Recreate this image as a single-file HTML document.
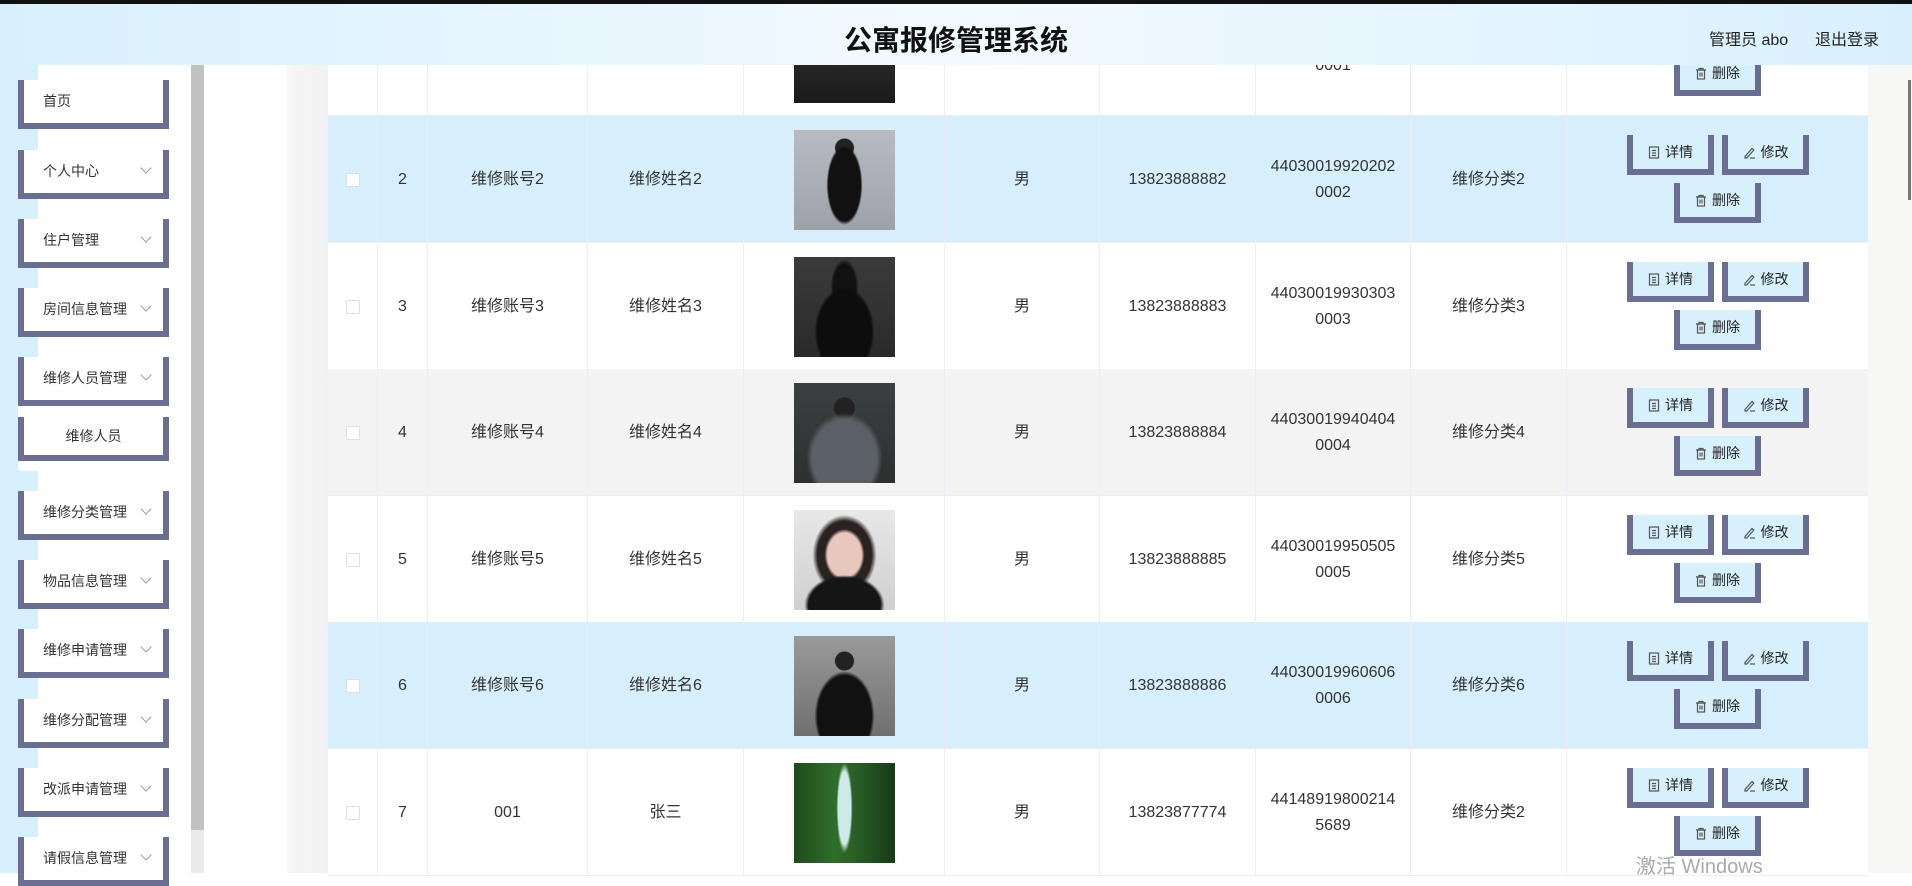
<!DOCTYPE html>
<html><head><meta charset="utf-8"><style>
*{margin:0;padding:0;box-sizing:border-box}
body{width:1912px;height:873px;overflow:hidden;position:relative;background:#fff;font-family:"Liberation Sans","Noto Sans CJK SC",sans-serif;color:#333}
.abs{position:absolute}
#hdr{left:0;top:0;width:1912px;height:65px;background:linear-gradient(90deg,#d8f0fd 0%,#e8f6fe 30%,#f2faff 50%,#e6f5fe 75%,#d8f0fd 100%);border-top:4px solid #111;z-index:10}
#hdr .t{position:absolute;left:0;right:0;top:15px;text-align:center;font-size:28px;font-weight:bold;color:#111}
#hdr .u{position:absolute;top:22px;font-size:16px;color:#222}
.mi{position:absolute;left:18px;width:151px;height:49px;background:#fff;border:6px solid #6b6e93;border-top:none;font-size:14px;color:#333;line-height:43px;padding-left:19px}
.mi .ch{position:absolute;right:13px;top:14px;width:8px;height:8px;border-right:1px solid #999;border-bottom:1px solid #999;transform:rotate(45deg)}
.row{position:absolute;left:328px;width:1540px;height:127px;border-bottom:1px solid #ebeef5}
.c{position:absolute;top:0;height:127px;border-right:1px solid #ebeef5;display:flex;align-items:center;justify-content:center;text-align:center;font-size:16px;line-height:26px;color:#333}
.cb{width:14px;height:14px;background:#fff;border:1px solid #dcdfe6;border-radius:2px}
.img{width:101px;height:100px}
.btn{position:absolute;width:87px;height:40px;background:#d6f0fc;border:6px solid #6b6e93;border-top:none;font-size:14px;color:#222;text-align:center;line-height:34px}
.btn svg{vertical-align:-2px;margin-right:5px}
</style></head><body>
<div id="hdr" class="abs"><div class="t">公寓报修管理系统</div><div class="u" style="left:1709px">管理员 abo</div><div class="u" style="left:1815px">退出登录</div></div>
<div class="abs" style="left:0;top:65px;width:38px;height:808px;background:#d6effc"></div>
<div class="abs" style="left:38px;top:65px;width:153px;height:808px;background:#fff"></div>
<div class="abs" style="left:191px;top:65px;width:13px;height:808px;background:#eaeaea"></div>
<div class="abs" style="left:191px;top:65px;width:13px;height:765px;background:#c1c1c1"></div>
<div class="abs" style="left:287px;top:65px;width:41px;height:808px;background:linear-gradient(90deg,#f6f6f6,#f1f1f1)"></div>
<div class="abs" style="left:1868px;top:65px;width:44px;height:808px;background:#f7f7f5"></div>
<div class="abs" style="left:1908px;top:80px;width:3px;height:120px;background:#777"></div>

<div class="mi" style="top:80px">首页</div>
<div class="mi" style="top:150px">个人中心<span class="ch"></span></div>
<div class="mi" style="top:219px">住户管理<span class="ch"></span></div>
<div class="mi" style="top:288px">房间信息管理<span class="ch"></span></div>
<div class="mi" style="top:357px">维修人员管理<span class="ch"></span></div>
<div class="abs" style="left:18px;top:406px;width:151px;height:65px;background:#fff;border-radius:0 0 4px 4px"></div>
<div class="mi" style="top:417px;height:44px;line-height:38px;padding-left:0;text-align:center">维修人员</div>
<div class="mi" style="top:491px">维修分类管理<span class="ch"></span></div>
<div class="mi" style="top:560px">物品信息管理<span class="ch"></span></div>
<div class="mi" style="top:629px">维修申请管理<span class="ch"></span></div>
<div class="mi" style="top:699px">维修分配管理<span class="ch"></span></div>
<div class="mi" style="top:768px">改派申请管理<span class="ch"></span></div>
<div class="mi" style="top:837px">请假信息管理<span class="ch"></span></div>

<div id="rows"></div>
<div class="abs" style="left:1636px;top:850px;font-size:20px;color:#aaa;z-index:5">激活 Windows</div>
<script>
var tops=[-11,116,243,369,496,622,749];
var bgs=['#fff','#d7effc','#fff','#f3f3f3','#fff','#d7effc','#fff'];
var acc=['维修账号1','维修账号2','维修账号3','维修账号4','维修账号5','维修账号6','001'];
var nm=['维修姓名1','维修姓名2','维修姓名3','维修姓名4','维修姓名5','维修姓名6','张三'];
var ph=['13823888881','13823888882','13823888883','13823888884','13823888885','13823888886','13823877774'];
var id=['44030019910101<br>0001','44030019920202<br>0002','44030019930303<br>0003','44030019940404<br>0004','44030019950505<br>0005','44030019960606<br>0006','44148919800214<br>5689'];
var cat=['维修分类1','维修分类2','维修分类3','维修分类4','维修分类5','维修分类6','维修分类2'];
var imgs=['linear-gradient(#3a3a3a,#1a1a1a)',
'radial-gradient(ellipse 18px 40px at 50% 55%,#111 90%,transparent 100%),radial-gradient(circle 10px at 50% 18%,#222 90%,transparent),linear-gradient(#b8bcc2,#9da2a8)',
'radial-gradient(ellipse 30px 45px at 50% 75%,#0d0d0d 90%,transparent 100%),radial-gradient(ellipse 14px 28px at 50% 30%,#111 80%,transparent),linear-gradient(#3b3b3b,#2a2a2a)',
'radial-gradient(ellipse 38px 45px at 50% 75%,#5b5f66 85%,transparent 100%),radial-gradient(circle 11px at 50% 25%,#222 90%,transparent),linear-gradient(#3b4040,#2e3030)',
'radial-gradient(ellipse 40px 30px at 50% 95%,#151515 90%,transparent),radial-gradient(ellipse 20px 26px at 50% 45%,#e8c8bd 85%,transparent),radial-gradient(ellipse 32px 40px at 50% 45%,#2a2220 85%,transparent),linear-gradient(#e8e8e8,#cfcfcf)',
'radial-gradient(ellipse 30px 45px at 50% 80%,#111 90%,transparent 100%),radial-gradient(circle 10px at 50% 25%,#222 90%,transparent),linear-gradient(#9a9a9a,#707070)',
'radial-gradient(ellipse 8px 45px at 50% 45%,#cfe8e8 80%,transparent),linear-gradient(90deg,#1d4a1e,#2f6e2a 40%,#2b5f27 60%,#173a18)'];
var cols=[[0,50],[50,50],[100,160],[260,156],[416,201],[617,155],[772,156],[928,155],[1083,156],[1239,301]];
var doc='<svg width="12" height="13" viewBox="0 0 12 13" fill="none" stroke="#555" stroke-width="1.2"><rect x="1.5" y="1" width="9" height="11"/><path d="M4 4.5h4M4 7h4M4 9.5h4"/></svg>';
var pen='<svg width="13" height="13" viewBox="0 0 13 13" fill="none" stroke="#555" stroke-width="1.2"><path d="M2 10.5L9 2.5l1.8 1.6L3.8 12H2z"/><path d="M7 12h5"/></svg>';
var bin='<svg width="12" height="13" viewBox="0 0 12 13" fill="none" stroke="#555" stroke-width="1.2"><path d="M1 3h10M4 3V1.5h4V3"/><rect x="2.5" y="3" width="7" height="9"/><path d="M5 5.5v4M7 5.5v4"/></svg>';
var h='';
for(var r=0;r<7;r++){
 var t=tops[r];
 var cont=['<div class="cb"></div>',String(r+1),acc[r],nm[r],'<div class="img" style="background:'+imgs[r]+'"></div>','男',ph[r],id[r],cat[r],''];
 h+='<div class="row" style="top:'+t+'px;background:'+bgs[r]+'">';
 for(var c=0;c<10;c++){h+='<div class="c" style="left:'+cols[c][0]+'px;width:'+cols[c][1]+'px'+(c==9?';border-right:none':'')+'">'+cont[c]+'</div>';}
 h+='<div class="btn" style="left:1299px;top:19px">'+doc+'详情</div>';
 h+='<div class="btn" style="left:1394px;top:19px">'+pen+'修改</div>';
 h+='<div class="btn" style="left:1346px;top:67px">'+bin+'删除</div>';
 h+='</div>';
}
document.getElementById('rows').innerHTML=h;
</script>
</body></html>
